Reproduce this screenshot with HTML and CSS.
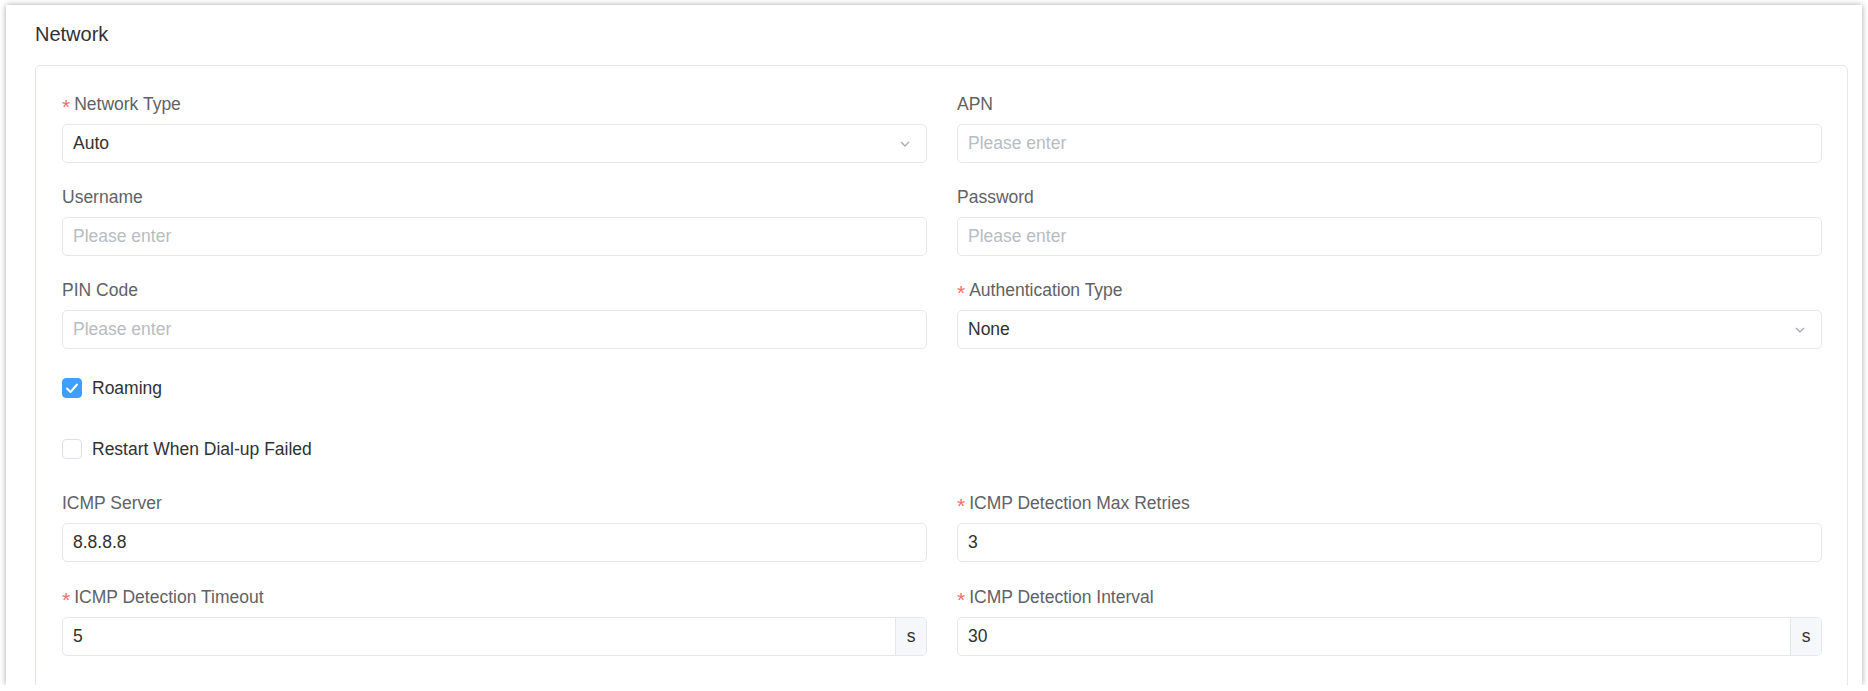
FILE: index.html
```html
<!DOCTYPE html>
<html lang="en">
<head>
  <meta charset="UTF-8">
  <title>Network</title>
  <link rel="stylesheet" href="styles.css">
</head>
<body>

  <div class="card">
    <h3 class="card-title">Network</h3>

    <div class="panel">
      <div class="form-grid">
        <div class="form-item">
          <label class="required">Network Type</label>
          <div class="field select">
            <span class="value">Auto</span>
            <svg class="arrow" width="10" height="6" viewBox="0 0 10 6"><polyline points="1,1 5,5 9,1" fill="none" stroke="#a8abb2" stroke-width="1.3"/></svg>
          </div>
        </div>
        <div class="form-item">
          <label>APN</label>
          <div class="field"><span class="placeholder">Please enter</span></div>
        </div>

        <div class="form-item">
          <label>Username</label>
          <div class="field"><span class="placeholder">Please enter</span></div>
        </div>
        <div class="form-item">
          <label>Password</label>
          <div class="field"><span class="placeholder">Please enter</span></div>
        </div>

        <div class="form-item">
          <label>PIN Code</label>
          <div class="field"><span class="placeholder">Please enter</span></div>
        </div>
        <div class="form-item">
          <label class="required">Authentication Type</label>
          <div class="field select">
            <span class="value">None</span>
            <svg class="arrow" width="10" height="6" viewBox="0 0 10 6"><polyline points="1,1 5,5 9,1" fill="none" stroke="#a8abb2" stroke-width="1.3"/></svg>
          </div>
        </div>

        <div class="check-row first">
          <span class="checkbox checked">
            <svg width="14" height="12" viewBox="0 0 14 12"><polyline points="2,6.5 5.5,10 12,2.5" fill="none" stroke="#fff" stroke-width="2" stroke-linecap="round" stroke-linejoin="round"/></svg>
          </span>
          <span class="check-label">Roaming</span>
        </div>

        <div class="check-row">
          <span class="checkbox"></span>
          <span class="check-label">Restart When Dial-up Failed</span>
        </div>

        <div class="form-item icmp">
          <label>ICMP Server</label>
          <div class="field"><span class="value">8.8.8.8</span></div>
        </div>
        <div class="form-item icmp">
          <label class="required">ICMP Detection Max Retries</label>
          <div class="field"><span class="value">3</span></div>
        </div>

        <div class="form-item">
          <label class="required">ICMP Detection Timeout</label>
          <div class="field with-suffix">
            <span class="value">5</span>
            <span class="suffix">s</span>
          </div>
        </div>
        <div class="form-item">
          <label class="required">ICMP Detection Interval</label>
          <div class="field with-suffix">
            <span class="value">30</span>
            <span class="suffix">s</span>
          </div>
        </div>
      </div>
    </div>
  </div>

</body>
</html>
```

FILE: styles.css
```css
body {
  margin: 0;
  background: #ffffff;
  font-family: 'Liberation Sans', Arial, sans-serif;
  overflow: hidden;
}

.card {
  margin: 5px 0 0 6px;
  width: 1856px;
  height: 680px;
  box-sizing: border-box;
  padding: 17px 14px 0 29px;
  background: #fff;
  box-shadow: 0 0 6px rgba(0, 0, 0, 0.35);
  overflow: hidden;
}

.card-title {
  margin: 0 0 18px 0;
  font-size: 20px;
  font-weight: normal;
  line-height: 25px;
  color: #303133;
}

.panel {
  border: 1px solid #e4e7ed;
  border-radius: 5px;
  padding: 27px 25px 40px 26px;
}

.form-grid {
  display: grid;
  grid-template-columns: 1fr 1fr;
  column-gap: 30px;
}

.form-item {
  margin-bottom: 23px;
}

.form-item.icmp {
  margin-bottom: 24px;
}

.form-item label {
  display: block;
  font-size: 17.5px;
  line-height: 22px;
  color: #606266;
  margin-bottom: 9px;
}

/* 필수 항목 별표 */
.form-item label.required::before {
  content: "*";
  display: inline-block;
  font-size: 21px;
  line-height: 10px;
  color: #f56c6c;
  margin-right: 4px;
  transform: translateY(4px);
}

.field {
  height: 39px;
  box-sizing: border-box;
  border: 1px solid #e4e7ed;
  border-radius: 5px;
  display: flex;
  align-items: center;
  padding-left: 10px;
  font-size: 17.5px;
  color: #303133;
  background: #fff;
}

.field .value {
  flex: 1;
}

.field .placeholder {
  flex: 1;
  color: #b8bcc4;
}

.select {
  padding-right: 16px;
}

.select .arrow {
  flex: none;
}

.with-suffix {
  overflow: hidden;
}

.with-suffix .suffix {
  flex: none;
  width: 30px;
  height: 100%;
  display: flex;
  align-items: center;
  justify-content: center;
  background: #f5f7fa;
  border-left: 1px solid #e4e7ed;
  color: #303133;
}

.check-row {
  grid-column: 1 / -1;
  display: flex;
  align-items: center;
  height: 34px;
  margin-bottom: 26px;
}

.check-row.first {
  margin-top: -1px;
  margin-bottom: 27px;
}

.checkbox {
  width: 20px;
  height: 20px;
  box-sizing: border-box;
  border: 1px solid #dcdfe6;
  border-radius: 4px;
  background: #fff;
  display: flex;
  align-items: center;
  justify-content: center;
  margin-right: 10px;
}

.checkbox.checked {
  background: #409eff;
  border-color: #409eff;
}

.check-label {
  font-size: 17.5px;
  color: #303133;
}
```
